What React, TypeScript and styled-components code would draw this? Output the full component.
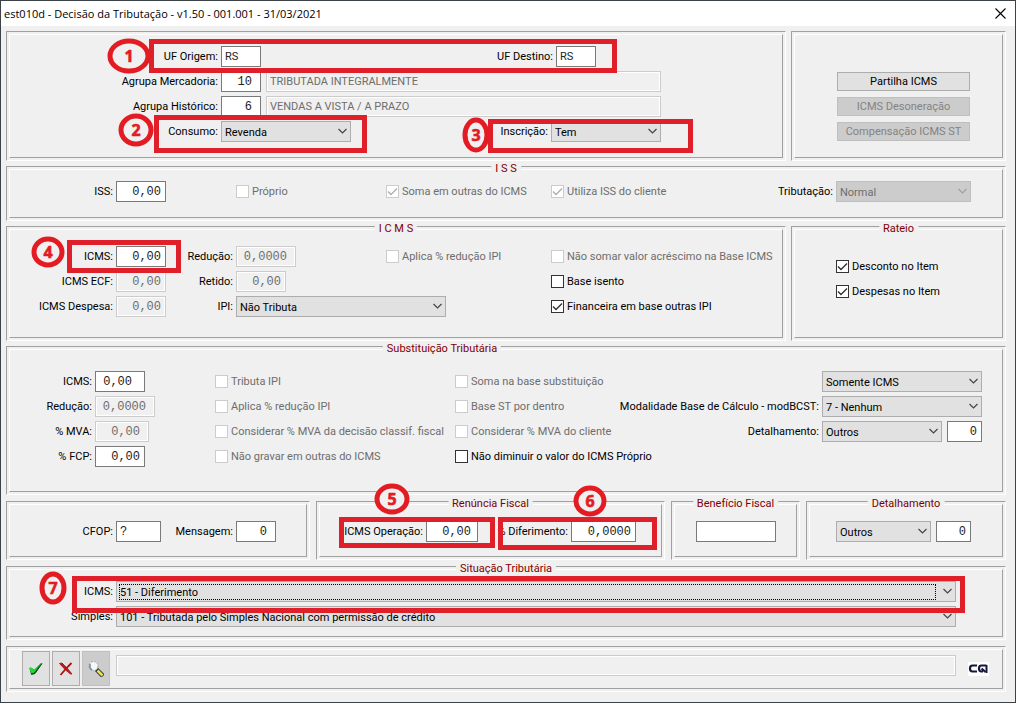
import React, { ReactNode, useId } from 'react';
import styled, { createGlobalStyle, css } from 'styled-components';

const ui = `Roboto, "Liberation Sans", Arial, sans-serif`;
const mono = `"Liberation Mono", "Courier New", monospace`;

const GlobalStyle = createGlobalStyle`
  * { box-sizing: border-box; }
  body { margin: 0; background: #f0f0f0; font-family: ${ui}; font-size: 11px; color: #000; }
`;

const Window = styled.div`
  position: relative;
  min-height: 100vh;
  display: flex;
  flex-direction: column;
  border: 1px solid #3b4348;
  background: #f0f0f0;
`;

const TitleBar = styled.header`
  height: 25px;
  padding: 0 4px 0 3px;
  display: flex;
  align-items: center;
  justify-content: space-between;
  background: #fff;
`;

const Title = styled.h1`
  margin: 0;
  font: 400 11px/16px "Open Sans", "Noto Sans", sans-serif;
`;

const CloseButton = styled.button`
  width: 22px;
  height: 22px;
  padding: 0;
  display: grid;
  place-items: center;
  border: 0;
  background: none;
`;

const Form = styled.form`
  padding: 5px 9px 10px 5px;
  display: flex;
  flex-direction: column;
  gap: 5px;
`;

const PanelRow = styled.div<{ $gap?: number }>`
  display: flex;
  gap: ${(p) => p.$gap ?? 5}px;
`;

const Bottom = styled.div`
  margin-top: 1px;
  display: flex;
  flex-direction: column;
  gap: 6px;
`;

const PanelFrame = styled.section<{ $height: number; $width?: number }>`
  position: relative;
  min-width: 0;
  min-height: ${(p) => p.$height}px;
  flex: ${(p) => (p.$width ? `0 0 ${p.$width}px` : '1 1 auto')};
  display: flex;
  padding: 2px;
  border: 1px solid;
  border-color: #a0a0a0 #fff #fff #a0a0a0;
`;

const PanelBody = styled.div<{ $pad: string }>`
  flex: 1;
  min-width: 0;
  padding: ${(p) => p.$pad};
  display: flex;
  flex-direction: column;
  gap: 4px;
  border: 1px solid;
  border-color: #fff #a0a0a0 #a0a0a0 #fff;
`;

const Legend = styled.h2<{ $at: string }>`
  position: absolute;
  top: -5px;
  left: ${(p) => p.$at};
  transform: translateX(-50%);
  margin: 0;
  padding: 0 4px;
  background: #f0f0f0;
  color: #800000;
  font: 400 11px/14px ${ui};
  white-space: pre;
`;

const Row = styled.div`
  min-height: 21px;
  display: flex;
  align-items: center;
`;

const Cell = styled.div<{ $w?: number; $end?: boolean }>`
  flex: ${(p) => (p.$w ? `0 0 ${p.$w}px` : '0 0 auto')};
  display: flex;
  align-items: center;
  ${(p) => p.$end && css`margin-left: auto;`}
`;

const Label = styled.label<{ $w?: number }>`
  flex: none;
  width: ${(p) => (p.$w ? `${p.$w}px` : 'auto')};
  margin-right: 3px;
  padding-top: 1px;
  text-align: right;
  line-height: 14px;
  white-space: nowrap;
`;

const TextBox = styled.input<{ $w?: number; $pad?: number; $kind?: 'text' | 'number' }>`
  height: 21px;
  flex: ${(p) => (p.$w ? `0 0 ${p.$w}px` : '1 1 0')};
  width: ${(p) => (p.$w ? `${p.$w}px` : 'auto')};
  min-width: 0;
  padding: 0 ${(p) => p.$pad ?? 4}px 0 3px;
  border: 1px solid #7a7a7a;
  border-radius: 0;
  outline: 0;
  background: #fff;
  color: #222;
  font: ${(p) => (p.$kind === 'text' ? `11px ${ui}` : `12px ${mono}`)};
  text-align: ${(p) => (p.$kind === 'text' ? 'left' : 'right')};
  &:disabled {
    border-color: #ccc;
    background: #f0f0f0;
    box-shadow: inset 0 0 0 1px #fff;
    color: #6d6d6d;
  }
`;

const CodeBox = styled(TextBox)`
  text-align: left;
`;

const SelectWrap = styled.span<{ $w?: number; $gap?: number }>`
  position: relative;
  display: flex;
  flex: ${(p) => (p.$w ? `0 0 ${p.$w}px` : '1 1 0')};
  margin-right: ${(p) => p.$gap ?? 0}px;
`;

const SelectBox = styled.select`
  appearance: none;
  width: 100%;
  height: 21px;
  padding: 1px 18px 0 3px;
  border: 1px solid #adadad;
  border-radius: 0;
  outline: 0;
  background: #e1e1e1;
  color: #000;
  font: 11px ${ui};
  &:disabled {
    border-color: #bfbfbf;
    background: #ccc;
    color: #6d6d6d;
    opacity: 1;
  }
`;

const Chevron = styled.svg`
  position: absolute;
  right: 4px;
  top: 7px;
  pointer-events: none;
`;

const FocusRing = styled.span`
  position: absolute;
  inset: 3px 20px 2px 3px;
  border: 1px dotted #000;
  pointer-events: none;
`;

const CheckLabel = styled.label<{ $off?: boolean }>`
  display: flex;
  align-items: center;
  gap: 3px;
  line-height: 14px;
  white-space: nowrap;
  color: ${(p) => (p.$off ? '#6d6d6d' : '#000')};
`;

const CheckText = styled.span`
  padding-top: 1px;
`;

const CheckBox = styled.input`
  appearance: none;
  width: 13px;
  height: 13px;
  margin: 0;
  flex: none;
  border: 1px solid #333;
  background: #fff;
  &:disabled { border-color: #ccc; }
`;

const TickHolder = styled.span`
  position: relative;
  display: flex;
`;

const Tick = styled.svg`
  position: absolute;
  left: 1px;
  top: 1px;
  pointer-events: none;
`;

const ActionButton = styled.button`
  width: 133px;
  height: 19px;
  padding: 1px 0 0;
  margin-bottom: 2px;
  border: 1px solid #adadad;
  background: #e1e1e1;
  color: #000;
  font: 11px/14px ${ui};
  &:disabled {
    border-color: #bfbfbf;
    background: #ccc;
    color: #838383;
  }
`;

const ToolButton = styled.button<{ $pressed?: boolean }>`
  width: 28px;
  height: 35px;
  padding: 0;
  margin-right: 2px;
  display: grid;
  place-items: center;
  border: 1px solid ${(p) => (p.$pressed ? '#bfbfbf' : '#adadad')};
  background: ${(p) => (p.$pressed ? '#ccc' : '#e1e1e1')};
`;

const Toolbar = styled.div`
  display: flex;
  align-items: center;
  padding-left: 12px;
`;

const StatusBox = styled(TextBox)`
  margin: 0 12px 6px 4px;
`;

const Marks = styled.svg`
  position: absolute;
  left: -1px;
  top: -1px;
  pointer-events: none;
`;

function Panel(props: { height: number; width?: number; pad: string; legend?: string; at?: string; children: ReactNode }) {
  return (
    <PanelFrame $height={props.height} $width={props.width}>
      {props.legend && <Legend $at={props.at ?? '50%'}>{props.legend}</Legend>}
      <PanelBody $pad={props.pad}>{props.children}</PanelBody>
    </PanelFrame>
  );
}

type FieldProps = { label?: string; lw?: number; w?: number; value: string; pad?: number; kind?: 'text' | 'number'; off?: boolean; name?: string };

function Field({ label, lw, w, value, pad, kind, off, name }: FieldProps) {
  const id = useId();
  return (
    <>
      {label && <Label htmlFor={id} $w={lw}>{label}</Label>}
      <TextBox id={id} aria-label={label ? undefined : name} $w={w} $pad={pad} $kind={kind} disabled={off} defaultValue={value} />
    </>
  );
}

function Combo(props: { label?: string; lw?: number; w?: number; gap?: number; value: string; off?: boolean; focused?: boolean; name?: string }) {
  const id = useId();
  return (
    <>
      {props.label && <Label htmlFor={id} $w={props.lw}>{props.label}</Label>}
      <SelectWrap $w={props.w} $gap={props.gap}>
        <SelectBox id={id} aria-label={props.label ? undefined : props.name} disabled={props.off}>
          <option>{props.value}</option>
        </SelectBox>
        {props.focused && <FocusRing />}
        <Chevron width="9" height="7" viewBox="0 0 9 7">
          <path d="M0.5 1L4.5 5L8.5 1" fill="none" stroke={props.off ? '#a0a0a0' : '#444'} strokeWidth="1.2" />
        </Chevron>
      </SelectWrap>
    </>
  );
}

function Check({ text, on, off }: { text: string; on?: boolean; off?: boolean }) {
  return (
    <CheckLabel $off={off}>
      <TickHolder>
        <CheckBox type="checkbox" defaultChecked={on} disabled={off} />
        {on && (
          <Tick width="11" height="11" viewBox="0 0 11 11">
            <path d="M1 5.5L4 8.5L10 2.5" fill="none" stroke={off ? '#b0b0b0' : '#333'} strokeWidth="1.4" />
          </Tick>
        )}
      </TickHolder>
      <CheckText>{text}</CheckText>
    </CheckLabel>
  );
}

const boxes = [
  [149, 39, 468, 34],
  [154, 115, 213, 38],
  [488, 119, 205, 34],
  [67, 240, 114, 33],
  [339, 517, 156, 31],
  [498, 517, 159, 33],
  [72, 576, 893, 37],
];

const balloons = [
  [129, 56, 19, 15],
  [136, 130, 15, 14],
  [476, 135, 11, 15],
  [48, 252, 14, 13],
  [392, 499, 15, 13],
  [590, 501, 14, 13],
  [53, 588, 11, 14],
];

function Annotations() {
  return (
    <Marks width="1016" height="703" viewBox="0 0 1016 703">
      <g fill="none" stroke="#df1f29" strokeWidth="5">
        {boxes.map(([x, y, w, h], i) => (
          <rect key={i} x={x + 2.5} y={y + 2.5} width={w - 5} height={h - 5} />
        ))}
      </g>
      {balloons.map(([cx, cy, rx, ry], i) => (
        <g key={i}>
          <ellipse cx={cx} cy={cy} rx={rx} ry={ry} fill="#f0f0f0" stroke="#e31b23" strokeWidth="5" />
          <text x={cx} y={cy + 6} textAnchor="middle" fill="#e31b23" stroke="#e31b23" strokeWidth="0.6" fontFamily="Open Sans" fontWeight="700" fontSize="16">
            {i + 1}
          </text>
        </g>
      ))}
    </Marks>
  );
}

export default function App() {
  return (
    <>
      <GlobalStyle />
      <Window>
        <TitleBar>
          <Title>est010d - Decisão da Tributação - v1.50 - 001.001 - 31/03/2021</Title>
          <CloseButton type="button" aria-label="Fechar">
            <svg width="11" height="11" viewBox="0 0 11 11">
              <path d="M0.5 0.5L10.5 10.5M10.5 0.5L0.5 10.5" stroke="#000" strokeWidth="1.1" />
            </svg>
          </CloseButton>
        </TitleBar>
        <Form onSubmit={(e) => e.preventDefault()}>
          <PanelRow>
            <Panel height={130} pad="11px 0 0">
              <Row>
                <Field label="UF Origem:" lw={208} w={40} kind="text" value="RS" />
                <Field label="UF Destino:" lw={292} w={40} kind="text" value="RS" />
              </Row>
              <Row>
                <Cell $w={256}><Field label="Agrupa Mercadoria:" lw={208} w={40} pad={8} value="10" /></Cell>
                <Field name="Mercadoria" w={395} kind="text" value="TRIBUTADA INTEGRALMENTE" off />
              </Row>
              <Row>
                <Cell $w={256}><Field label="Agrupa Histórico:" lw={208} w={40} pad={8} value="6" /></Cell>
                <Field name="Histórico" w={395} kind="text" value="VENDAS A VISTA / A PRAZO" off />
              </Row>
              <Row>
                <Combo label="Consumo:" lw={208} w={130} value="Revenda" />
                <Combo label="Inscrição:" lw={197} w={110} value="Tem" />
              </Row>
            </Panel>
            <Panel height={130} width={215} pad="37px 0 0 42px">
              <ActionButton type="button">Partilha ICMS</ActionButton>
              <ActionButton type="button" disabled>ICMS Desoneração</ActionButton>
              <ActionButton type="button" disabled>Compensação ICMS ST</ActionButton>
            </Panel>
          </PanelRow>

          <Panel height={55} pad="11px 31px 0 0" legend="I S S">
            <Row>
              <Cell $w={226}><Field label="ISS:" lw={103} w={50} value="0,00" /></Cell>
              <Cell $w={150}><Check text="Próprio" off /></Cell>
              <Cell $w={165}><Check text="Soma em outras do ICMS" on off /></Cell>
              <Cell><Check text="Utiliza ISS do cliente" on off /></Cell>
              <Cell $end><Combo label="Tributação:" w={135} value="Normal" off /></Cell>
            </Row>
          </Panel>

          <PanelRow>
            <Panel height={115} pad="16px 0 0" legend="I C M S">
              <Row>
                <Cell $w={156}><Field label="ICMS:" lw={103} w={50} value="0,00" /></Cell>
                <Cell $w={220}><Field label="Redução:" lw={67} w={60} pad={8} value="0,0000" off /></Cell>
                <Cell $w={165}><Check text="Aplica % redução IPI" off /></Cell>
                <Check text="Não somar valor acréscimo na Base ICMS" off />
              </Row>
              <Row>
                <Cell $w={156}><Field label="ICMS ECF:" lw={103} w={50} value="0,00" off /></Cell>
                <Cell $w={385}><Field label="Retido:" lw={67} w={50} value="0,00" off /></Cell>
                <Check text="Base isento" />
              </Row>
              <Row>
                <Cell $w={156}><Field label="ICMS Despesa:" lw={103} w={50} value="0,00" off /></Cell>
                <Cell $w={385}><Combo label="IPI:" lw={67} w={210} value="Não Tributa" /></Cell>
                <Check text="Financeira em base outras IPI" on />
              </Row>
            </Panel>
            <Panel height={115} width={215} pad="26px 0 0 41px" legend="Rateio">
              <Row><Check text="Desconto no Item" on /></Row>
              <Row><Check text="Despesas no Item" on /></Row>
            </Panel>
          </PanelRow>

          <Panel height={149} pad="21px 20px 0 0" legend="Substituição Tributária" at="435px">
            <Row>
              <Cell $w={205}><Field label="ICMS:" lw={82} w={50} pad={12} value="0,00" /></Cell>
              <Cell $w={240}><Check text="Tributa IPI" off /></Cell>
              <Check text="Soma na base substituição" off />
              <Cell $end><Combo name="Tipo" w={160} value="Somente ICMS" /></Cell>
            </Row>
            <Row>
              <Cell $w={205}><Field label="Redução:" lw={82} w={60} pad={8} value="0,0000" off /></Cell>
              <Cell $w={240}><Check text="Aplica % redução IPI" off /></Cell>
              <Check text="Base ST por dentro" off />
              <Cell $end><Combo label="Modalidade Base de Cálculo - modBCST:" w={160} value="7 - Nenhum" /></Cell>
            </Row>
            <Row>
              <Cell $w={205}><Field label="% MVA:" lw={82} w={54} pad={8} value="0,00" off /></Cell>
              <Cell $w={240}><Check text="Considerar % MVA da decisão classif. fiscal" off /></Cell>
              <Check text="Considerar % MVA do cliente" off />
              <Cell $end>
                <Combo label="Detalhamento:" w={120} gap={5} value="Outros" />
                <Field name="Código do detalhamento" w={35} value="0" />
              </Cell>
            </Row>
            <Row>
              <Cell $w={205}><Field label="% FCP:" lw={82} w={50} value="0,00" /></Cell>
              <Cell $w={240}><Check text="Não gravar em outras do ICMS" off /></Cell>
              <Check text="Não diminuir o valor do ICMS Próprio" />
            </Row>
          </Panel>

          <Bottom>
            <PanelRow $gap={6}>
              <Panel height={59} width={304} pad="16px 0 0">
                <Row>
                  <Label htmlFor="cfop" $w={103}>CFOP:</Label>
                  <CodeBox id="cfop" $w={45} defaultValue="?" />
                  <Field label="Mensagem:" lw={72} w={40} pad={8} value="0" />
                </Row>
              </Panel>
              <Panel height={59} pad="16px 0 0" legend="Renúncia Fiscal">
                <Row>
                  <Field label="ICMS Operação:" lw={103} w={52} pad={6} value="0,00" />
                  <Field label="% Diferimento:" lw={90} w={65} value="0,0000" />
                </Row>
              </Panel>
              <Panel height={59} width={129} pad="16px 20px 0 21px" legend="Benefício Fiscal">
                <Row><Field name="Benefício Fiscal" w={80} kind="text" value="" /></Row>
              </Panel>
              <Panel height={59} width={200} pad="16px 0 0 26px" legend="Detalhamento">
                <Row>
                  <Combo name="Detalhamento" w={95} gap={5} value="Outros" />
                  <Field name="Código" w={35} value="0" />
                </Row>
              </Panel>
            </PanelRow>
            <Panel height={74} pad="11px 46px 0 0" legend="Situação Tributária">
              <Row><Combo label="ICMS:" lw={103} value="51 - Diferimento" focused /></Row>
              <Row><Combo label="Simples:" lw={103} value="101 - Tributada pelo Simples Nacional com permissão de crédito" /></Row>
            </Panel>
            <Panel height={46} pad="1px 13px 0 0">
              <Toolbar>
                <ToolButton type="button" aria-label="Confirmar">
                  <svg width="14" height="13" viewBox="0 0 14 13">
                    <path d="M1 6L3.500 7L5 8.500L13 1.500L6 11.500L2.500 12.500Z" fill="#0a4d10" stroke="#0a4d10" />
                    <path d="M0.500 6L3 6L4.500 8.500L12 1L5 10.500L2.500 11Z" fill="#22dd33" stroke="#22dd33" strokeWidth="0.6" />
                  </svg>
                </ToolButton>
                <ToolButton type="button" aria-label="Cancelar">
                  <svg width="14" height="14" viewBox="0 0 14 14">
                    <path d="M0.500 1.500L3 1L8 6L13 12L11.500 12L6.500 8Z" fill="#c01818" stroke="#a01010" strokeWidth="0.8" />
                    <path d="M12.500 1L8 5.500L1.500 13" fill="none" stroke="#b01010" strokeWidth="1.8" />
                  </svg>
                </ToolButton>
                <ToolButton type="button" aria-label="Pesquisar" $pressed>
                  <svg width="16" height="16" viewBox="0 0 16 16">
                    <path d="M8.500 8.500L15 15" stroke="#333" strokeWidth="4.500" />
                    <path d="M9.500 9.500L14.500 14.500" stroke="#e8e060" strokeWidth="2.500" />
                    <circle cx="5.500" cy="5" r="4.500" fill="#f4f8fa" stroke="#9aa4aa" strokeDasharray="2 1" />
                    <path d="M2 3V7L4 9" fill="none" stroke="#6c8ba0" strokeWidth="1.500" />
                  </svg>
                </ToolButton>
                <StatusBox aria-label="Situação" disabled />
                <svg width="21" height="14" viewBox="0 0 21 14" role="img" aria-label="CGI">
                  <rect width="21" height="14" fill="#fff" />
                  <path d="M9 3.500H4.500Q2 3.500 2 6.500T4.500 9.500H9" fill="none" stroke="#15183a" strokeWidth="2.200" />
                  <path d="M18.500 3.500H13.500Q11 3.500 11 6.500T13.500 9.500H15M13.500 6.500L17.500 10" fill="none" stroke="#15183a" strokeWidth="2.200" />
                  <path d="M18.500 3V11" stroke="#15183a" strokeWidth="2" />
                </svg>
              </Toolbar>
            </Panel>
          </Bottom>
        </Form>
        <Annotations />
      </Window>
    </>
  );
}
